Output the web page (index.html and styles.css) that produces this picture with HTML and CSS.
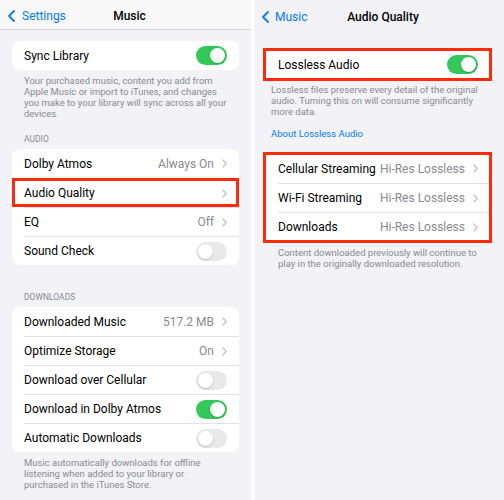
FILE: index.html
```html
<!DOCTYPE html>
<html>
  <head>
    <meta charset="UTF-8" />
    <title>Music Settings - Audio Quality</title>
    <link rel="stylesheet" href="styles.css">
  </head>
  <body>
    <!-- left: Settings > Music -->
    <section class="screen left">
      <header class="nav">
        <a class="back">
          <svg width="7" height="12" viewBox="0 0 7 12"><path d="M6 1 L1 6 L6 11" /></svg>
          Settings
        </a>
        <h1 class="title">Music</h1>
        <span></span>
      </header>

      <div class="group sync">
        <div class="row">
          <div class="row-inner">
            <span class="label">Sync Library</span>
            <span class="switch on"></span>
          </div>
        </div>
      </div>
      <p class="foot">
        Your purchased music, content you add from<br />
        Apple Music or import to iTunes, and changes<br />
        you make to your library will sync across all your<br />
        devices.
      </p>

      <h2 class="section-head audio">Audio</h2>
      <div class="group">
        <div class="row">
          <div class="row-inner">
            <span class="label">Dolby Atmos</span>
            <span class="value">Always On<svg class="chev" width="5" height="9" viewBox="0 0 5 9"><path d="M1 1 L4.2 4.5 L1 8" /></svg></span>
          </div>
        </div>
        <div class="row marked">
          <div class="row-inner">
            <span class="label">Audio Quality</span>
            <span class="value"><svg class="chev" width="5" height="9" viewBox="0 0 5 9"><path d="M1 1 L4.2 4.5 L1 8" /></svg></span>
          </div>
        </div>
        <div class="row">
          <div class="row-inner">
            <span class="label">EQ</span>
            <span class="value">Off<svg class="chev" width="5" height="9" viewBox="0 0 5 9"><path d="M1 1 L4.2 4.5 L1 8" /></svg></span>
          </div>
        </div>
        <div class="row">
          <div class="row-inner">
            <span class="label">Sound Check</span>
            <span class="switch"></span>
          </div>
        </div>
      </div>

      <h2 class="section-head downloads">Downloads</h2>
      <div class="group">
        <div class="row">
          <div class="row-inner">
            <span class="label">Downloaded Music</span>
            <span class="value">517.2 MB<svg class="chev" width="5" height="9" viewBox="0 0 5 9"><path d="M1 1 L4.2 4.5 L1 8" /></svg></span>
          </div>
        </div>
        <div class="row">
          <div class="row-inner">
            <span class="label">Optimize Storage</span>
            <span class="value">On<svg class="chev" width="5" height="9" viewBox="0 0 5 9"><path d="M1 1 L4.2 4.5 L1 8" /></svg></span>
          </div>
        </div>
        <div class="row">
          <div class="row-inner">
            <span class="label">Download over Cellular</span>
            <span class="switch"></span>
          </div>
        </div>
        <div class="row">
          <div class="row-inner">
            <span class="label">Download in Dolby Atmos</span>
            <span class="switch on"></span>
          </div>
        </div>
        <div class="row">
          <div class="row-inner">
            <span class="label">Automatic Downloads</span>
            <span class="switch"></span>
          </div>
        </div>
      </div>
      <p class="foot">
        Music automatically downloads for offline<br />
        listening when added to your library or<br />
        purchased in the iTunes Store.
      </p>
    </section>

    <!-- right: Music > Audio Quality -->
    <section class="screen right">
      <header class="nav">
        <a class="back">
          <svg width="7" height="12" viewBox="0 0 7 12"><path d="M6 1 L1 6 L6 11" /></svg>
          Music
        </a>
        <h1 class="title">Audio Quality</h1>
        <span></span>
      </header>

      <div class="group lossless marked">
        <div class="row">
          <div class="row-inner">
            <span class="label">Lossless Audio</span>
            <span class="switch on"></span>
          </div>
        </div>
      </div>
      <p class="foot narrow">
        Lossless files preserve every detail of the original<br />
        audio. Turning this on will consume significantly<br />
        more data.
      </p>
      <a class="link">About Lossless Audio</a>

      <div class="group streaming marked">
        <div class="row">
          <div class="row-inner">
            <span class="label">Cellular Streaming</span>
            <span class="value">Hi-Res Lossless<svg class="chev" width="5" height="9" viewBox="0 0 5 9"><path d="M1 1 L4.2 4.5 L1 8" /></svg></span>
          </div>
        </div>
        <div class="row">
          <div class="row-inner">
            <span class="label">Wi-Fi Streaming</span>
            <span class="value">Hi-Res Lossless<svg class="chev" width="5" height="9" viewBox="0 0 5 9"><path d="M1 1 L4.2 4.5 L1 8" /></svg></span>
          </div>
        </div>
        <div class="row">
          <div class="row-inner">
            <span class="label">Downloads</span>
            <span class="value">Hi-Res Lossless<svg class="chev" width="5" height="9" viewBox="0 0 5 9"><path d="M1 1 L4.2 4.5 L1 8" /></svg></span>
          </div>
        </div>
      </div>
      <p class="foot after-streaming">
        Content downloaded previously will continue to<br />
        play in the originally downloaded resolution.
      </p>
    </section>
  </body>
</html>
```

FILE: styles.css
```css
* {
  box-sizing: border-box;
  margin: 0;
  padding: 0;
}

html {
  font-family: Roboto, "Liberation Sans", sans-serif;
}

body {
  width: 504px;
  height: 500px;
  display: flex;
  gap: 3px;
  background: #fff;
  overflow: hidden;
}

.screen {
  height: 500px;
  background: #f2f2f7;
  color: #000;
}

.screen.left {
  width: 251px;
}

.screen.right {
  width: 250px;
}

/* nav bar */

.nav {
  display: grid;
  grid-template-columns: 1fr auto 1fr;
  align-items: center;
  height: 30px;
  padding: 3px 0 0 8px;
}

.left .nav {
  background: #f8f8f8;
  border-bottom: 1px solid #d8d8dc;
}

.back {
  display: flex;
  align-items: center;
  gap: 7px;
  color: #007aff;
  font-size: 12px;
}

.right .back {
  gap: 6px;
}

.back svg path {
  fill: none;
  stroke: #007aff;
  stroke-width: 1.8;
  stroke-linecap: round;
  stroke-linejoin: round;
}

.title {
  font-size: 12px;
  font-weight: 500;
}

/* grouped lists */

.group {
  background: #fff;
  border-radius: 8px;
  margin: 0 12px;
}

.right .group {
  margin: 0 14px 0 11px;
}

.row {
  display: flex;
  height: 29px;
  padding-left: 12px;
}

.right .row {
  padding-left: 13px;
}

.row-inner {
  flex: 1;
  display: flex;
  align-items: center;
  justify-content: space-between;
  padding-right: 12px;
  white-space: nowrap;
}

.row + .row .row-inner {
  border-top: 1px solid #e2e2e5;
}

.label {
  font-size: 12px;
}

.value {
  display: flex;
  align-items: center;
  gap: 8px;
  font-size: 12px;
  color: #8a8a8e;
}

.chev path {
  fill: none;
  stroke: #c4c4c7;
  stroke-width: 1.3;
  stroke-linecap: round;
  stroke-linejoin: round;
}

.switch {
  display: flex;
  justify-content: flex-start;
  width: 31px;
  height: 19px;
  padding: 2px;
  border-radius: 10px;
  background: #e9e9eb;
}

.switch.on {
  justify-content: flex-end;
  background: #34c759;
}

.switch::after {
  content: "";
  width: 15px;
  height: 15px;
  border-radius: 50%;
  background: #fff;
  box-shadow: 0 1px 2px rgba(0, 0, 0, 0.2);
}

.marked {
  outline: 3px solid #ff2a0a;
  outline-offset: -3px;
}

.right .marked {
  border-radius: 0;
  outline-offset: -1px;
}

/* section text */

.foot {
  font-size: 9.5px;
  line-height: 11px;
  color: #8a8a8e;
  padding: 5px 24px 0;
  white-space: nowrap;
}

.foot.narrow {
  padding-left: 17px;
}

.foot.after-streaming {
  padding-top: 6px;
}

.section-head {
  font-size: 8.5px;
  font-weight: 400;
  line-height: 11px;
  text-transform: uppercase;
  color: #8a8a8e;
  padding-left: 24px;
  margin-bottom: 4px;
}

.group.sync {
  margin-top: 11px;
}

.section-head.audio {
  margin-top: 15px;
}

.section-head.downloads {
  margin-top: 27px;
}

.group.lossless {
  margin-top: 20px;
}

.link {
  display: block;
  margin-top: 11px;
  padding-left: 17px;
  font-size: 9.5px;
  line-height: 11px;
  color: #007aff;
}

.group.streaming {
  margin-top: 15px;
}
```
